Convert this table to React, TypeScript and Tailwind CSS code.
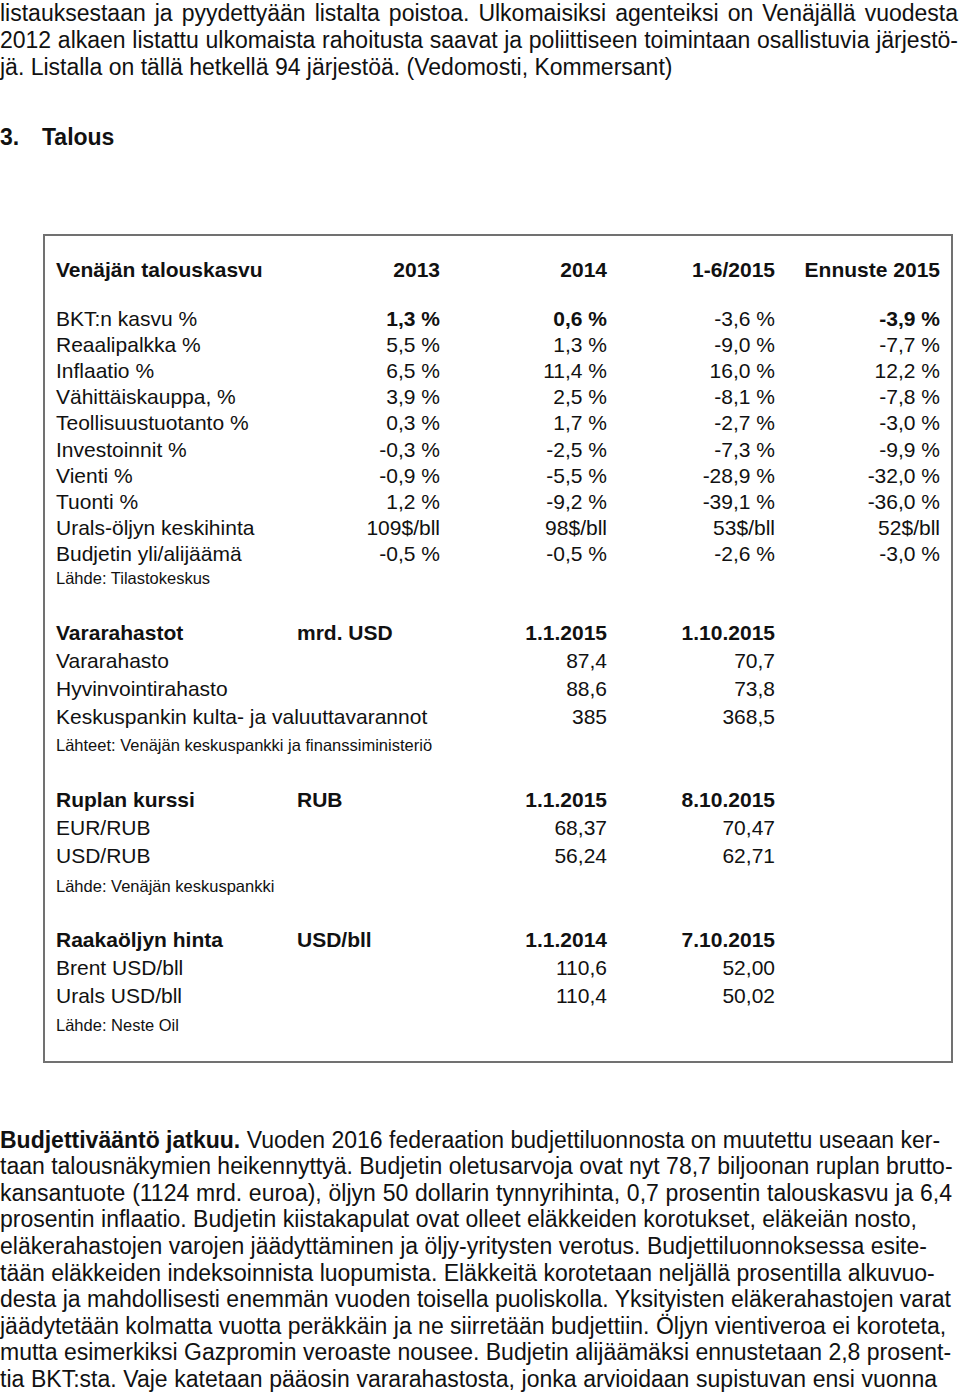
import React from 'react'

// Venäjän talous -sivu: leipäteksti, taulukkolaatikko ja jatkokappale

type Line = { text: React.ReactNode; w?: number }

const TOP_LINES: Line[] = [
  { text: 'listauksestaan ja pyydettyään listalta poistoa. Ulkomaisiksi agenteiksi on Venäjällä vuodesta', w: 958 },
  { text: '2012 alkaen listattu ulkomaista rahoitusta saavat ja poliittiseen toimintaan osallistuvia järjestö-', w: 958 },
  { text: 'jä. Listalla on tällä hetkellä 94 järjestöä. (Vedomosti, Kommersant)' }
]

const BOTTOM_LINES: Line[] = [
  {
    text: (
      <>
        <b>Budjettivääntö jatkuu.</b> Vuoden 2016 federaation budjettiluonnosta on muutettu useaan ker-
      </>
    ),
    w: 937
  },
  { text: 'taan talousnäkymien heikennyttyä. Budjetin oletusarvoja ovat nyt 78,7 biljoonan ruplan brutto-', w: 952 },
  { text: 'kansantuote (1124 mrd. euroa), öljyn 50 dollarin tynnyrihinta, 0,7 prosentin talouskasvu ja 6,4', w: 952 },
  { text: 'prosentin inflaatio. Budjetin kiistakapulat ovat olleet eläkkeiden korotukset, eläkeiän nosto,', w: 917 },
  { text: 'eläkerahastojen varojen jäädyttäminen ja öljy-yritysten verotus. Budjettiluonnoksessa esite-', w: 918 },
  { text: 'tään eläkkeiden indeksoinnista luopumista. Eläkkeitä korotetaan neljällä prosentilla alkuvuo-', w: 934 },
  { text: 'desta ja mahdollisesti enemmän vuoden toisella puoliskolla. Yksityisten eläkerahastojen varat', w: 951 },
  { text: 'jäädytetään kolmatta vuotta peräkkäin ja ne siirretään budjettiin. Öljyn vientiveroa ei koroteta,', w: 938 },
  { text: 'mutta esimerkiksi Gazpromin veroaste nousee. Budjetin alijäämäksi ennustetaan 2,8 prosent-', w: 949 },
  { text: 'tia BKT:sta. Vaje katetaan pääosin vararahastosta, jonka arvioidaan supistuvan ensi vuonna', w: 937 }
]

const GROWTH: [string, string, string, string, string][] = [
  ['Reaalipalkka %', '5,5 %', '1,3 %', '-9,0 %', '-7,7 %'],
  ['Inflaatio %', '6,5 %', '11,4 %', '16,0 %', '12,2 %'],
  ['Vähittäiskauppa, %', '3,9 %', '2,5 %', '-8,1 %', '-7,8 %'],
  ['Teollisuustuotanto %', '0,3 %', '1,7 %', '-2,7 %', '-3,0 %'],
  ['Investoinnit %', '-0,3 %', '-2,5 %', '-7,3 %', '-9,9 %'],
  ['Vienti %', '-0,9 %', '-5,5 %', '-28,9 %', '-32,0 %'],
  ['Tuonti %', '1,2 %', '-9,2 %', '-39,1 %', '-36,0 %'],
  ['Urals-öljyn keskihinta', '109$/bll', '98$/bll', '53$/bll', '52$/bll'],
  ['Budjetin yli/alijäämä', '-0,5 %', '-0,5 %', '-2,6 %', '-3,0 %']
]

interface SmallTableProps {
  title: string
  unit: string
  d1: string
  d2: string
  rows: [string, string, string][]
  source: string
  sourceGap: string
}

const TextLine = ({ line }: { line: Line }) => (
  <div
    className={line.w ? 'whitespace-nowrap text-justify [text-align-last:justify]' : 'whitespace-nowrap'}
    style={line.w ? { width: line.w } : undefined}
  >
    {line.text}
  </div>
)

const SmallTable: React.FC<SmallTableProps> = ({ title, unit, d1, d2, rows, source, sourceGap }) => (
  <div>
    <div className="grid grid-cols-[241px_153px_157px_168px] font-bold leading-[28px]">
      <div>{title}</div>
      <div>{unit}</div>
      <div className="text-right">{d1}</div>
      <div className="text-right">{d2}</div>
    </div>
    {rows.map(r => (
      <div key={r[0]} className="grid grid-cols-[241px_153px_157px_168px] leading-[28px]">
        <div className="col-span-2 whitespace-nowrap">{r[0]}</div>
        <div className="text-right">{r[1]}</div>
        <div className="text-right">{r[2]}</div>
      </div>
    ))}
    <div className={`text-[16.5px] leading-[20px] ${sourceGap}`}>{source}</div>
  </div>
)

export default function App() {
  return (
    <div className="w-[960px] h-[1396px] overflow-hidden bg-white text-[#111] font-['Liberation_Sans',Arial,sans-serif]">
      <div className="text-[23px] leading-[27.2px]">
        {TOP_LINES.map((l, i) => (
          <TextLine key={i} line={l} />
        ))}
      </div>

      <h2 className="mt-[41px] flex text-[23px] font-bold leading-[28px]">
        <span className="w-[42px]">3.</span>
        <span>Talous</span>
      </h2>

      <div className="ml-[43px] mt-[83px] w-[910px] border-2 border-[#717171] pl-[11px] pt-[21px] pb-[26px] text-[21px]">
        <div className="grid grid-cols-[244px_140px_167px_168px_165px] font-bold leading-[26px]">
          <div>Venäjän talouskasvu</div>
          <div className="text-right">2013</div>
          <div className="text-right">2014</div>
          <div className="text-right">1-6/2015</div>
          <div className="text-right">Ennuste 2015</div>
        </div>
        <div className="mt-[23px] leading-[26.2px]">
          <div className="grid grid-cols-[244px_140px_167px_168px_165px]">
            <div>BKT:n kasvu %</div>
            <div className="text-right font-bold">1,3 %</div>
            <div className="text-right font-bold">0,6 %</div>
            <div className="text-right">-3,6 %</div>
            <div className="text-right font-bold">-3,9 %</div>
          </div>
          {GROWTH.map(r => (
            <div key={r[0]} className="grid grid-cols-[244px_140px_167px_168px_165px]">
              <div className="whitespace-nowrap">{r[0]}</div>
              <div className="text-right">{r[1]}</div>
              <div className="text-right">{r[2]}</div>
              <div className="text-right">{r[3]}</div>
              <div className="text-right">{r[4]}</div>
            </div>
          ))}
        </div>
        <div className="text-[16.5px] leading-[20px]">Lähde: Tilastokeskus</div>

        <div className="mt-[31px]">
          <SmallTable
            title="Vararahastot"
            unit="mrd. USD"
            d1="1.1.2015"
            d2="1.10.2015"
            rows={[
              ['Vararahasto', '87,4', '70,7'],
              ['Hyvinvointirahasto', '88,6', '73,8'],
              ['Keskuspankin kulta- ja valuuttavarannot', '385', '368,5']
            ]}
            source="Lähteet: Venäjän keskuspankki ja finanssiministeriö"
            sourceGap="mt-[4px]"
          />
        </div>

        <div className="mt-[31px]">
          <SmallTable
            title="Ruplan kurssi"
            unit="RUB"
            d1="1.1.2015"
            d2="8.10.2015"
            rows={[
              ['EUR/RUB', '68,37', '70,47'],
              ['USD/RUB', '56,24', '62,71']
            ]}
            source="Lähde: Venäjän keskuspankki"
            sourceGap="mt-[6px]"
          />
        </div>

        <div className="mt-[30px]">
          <SmallTable
            title="Raakaöljyn hinta"
            unit="USD/bll"
            d1="1.1.2014"
            d2="7.10.2015"
            rows={[
              ['Brent USD/bll', '110,6', '52,00'],
              ['Urals USD/bll', '110,4', '50,02']
            ]}
            source="Lähde: Neste Oil"
            sourceGap="mt-[5px]"
          />
        </div>
      </div>

      <div className="mt-[64px] text-[23px] leading-[26.6px]">
        {BOTTOM_LINES.map((l, i) => (
          <TextLine key={i} line={l} />
        ))}
      </div>
    </div>
  )
}
